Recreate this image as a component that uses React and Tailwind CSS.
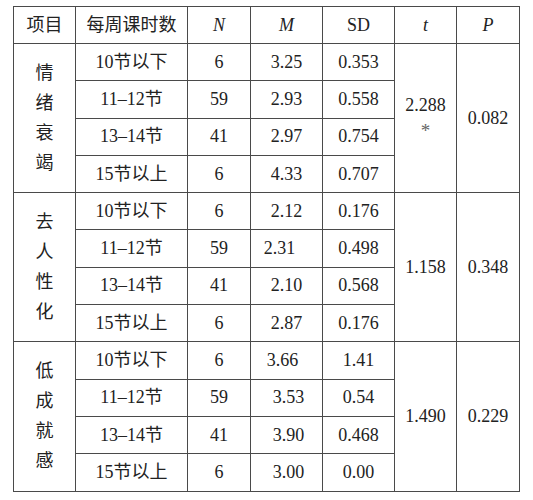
import React from "react";

const groups = [
  {
    name: "情绪衰竭",
    t: ["2.288", "*"],
    p: "0.082",
    rows: [
      ["10节以下", "6", "3.25", "0.353"],
      ["11–12节", "59", "2.93", "0.558"],
      ["13–14节", "41", "2.97", "0.754"],
      ["15节以上", "6", "4.33", "0.707"],
    ],
  },
  {
    name: "去人性化",
    t: ["1.158"],
    p: "0.348",
    rows: [
      ["10节以下", "6", "2.12", "0.176"],
      ["11–12节", "59", "2.31", "0.498", "pr-[14px]"],
      ["13–14节", "41", "2.10", "0.568"],
      ["15节以上", "6", "2.87", "0.176"],
    ],
  },
  {
    name: "低成就感",
    t: ["1.490"],
    p: "0.229",
    rows: [
      ["10节以下", "6", "3.66", "1.41", "pr-[8px]"],
      ["11–12节", "59", "3.53", "0.54", "pl-[4px]"],
      ["13–14节", "41", "3.90", "0.468", "pl-[4px]"],
      ["15节以上", "6", "3.00", "0.00", "pl-[4px]"],
    ],
  },
];

const cell = "border border-[#4a4a4a] text-center align-middle p-0";

export default function App() {
  return (
    <div
      className="bg-white w-[533px] h-[500px] pt-[6px] pl-[13px] text-[#222] text-[18px]"
      style={{ fontFamily: '"Liberation Serif", "Noto Sans CJK SC", serif' }}
    >
      <table className="border-collapse table-fixed w-[506px]">
        <colgroup>
          <col className="w-[62px]" />
          <col className="w-[112px]" />
          <col className="w-[63px]" />
          <col className="w-[72px]" />
          <col className="w-[72px]" />
          <col className="w-[62px]" />
          <col className="w-[63px]" />
        </colgroup>
        <thead>
          <tr className="h-[37px]">
            <th className={`${cell} font-normal`}>项目</th>
            <th className={`${cell} font-normal`}>每周课时数</th>
            <th className={`${cell} font-normal italic`}>N</th>
            <th className={`${cell} font-normal italic`}>M</th>
            <th className={`${cell} font-normal`}>SD</th>
            <th className={`${cell} font-normal italic`}>t</th>
            <th className={`${cell} font-normal italic`}>P</th>
          </tr>
        </thead>
        <tbody>
          {groups.map((g) =>
            g.rows.map((r, i) => (
              <tr key={g.name + i} className="h-[37.3px]">
                {i === 0 && (
                  <td rowSpan={4} className={cell}>
                    <div className="flex flex-col items-center leading-[30px]">
                      {g.name.split("").map((c) => (
                        <span key={c}>{c}</span>
                      ))}
                    </div>
                  </td>
                )}
                <td className={cell}>{r[0]}</td>
                <td className={cell}>{r[1]}</td>
                <td className={`${cell} ${r[4] || ""}`}>{r[2]}</td>
                <td className={cell}>{r[3]}</td>
                {i === 0 && (
                  <td rowSpan={4} className={cell}>
                    <div className="flex flex-col items-center leading-[26px]">
                      {g.t.map((x) => (
                        <span key={x} className={x === "*" ? "text-[19px] text-[#666]" : ""}>
                          {x}
                        </span>
                      ))}
                    </div>
                  </td>
                )}
                {i === 0 && (
                  <td rowSpan={4} className={cell}>
                    {g.p}
                  </td>
                )}
              </tr>
            ))
          )}
        </tbody>
      </table>
    </div>
  );
}
